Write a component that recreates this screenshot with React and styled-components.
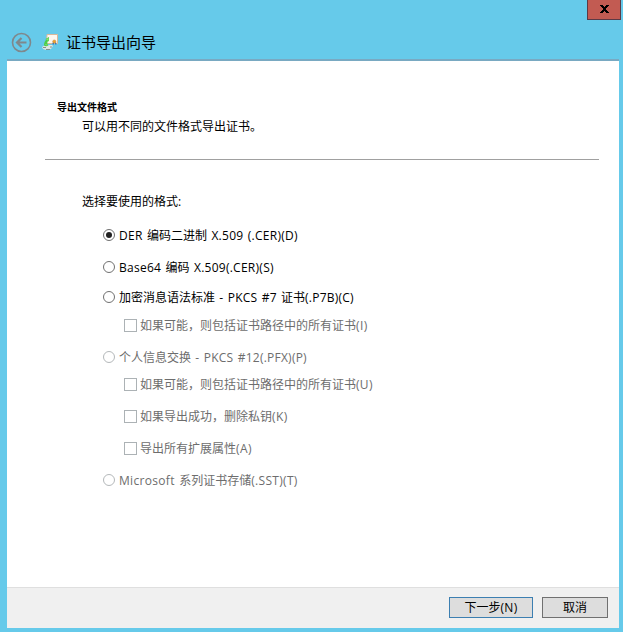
import React from 'react';
import styled, { createGlobalStyle } from 'styled-components';

const GlobalStyle = createGlobalStyle`
  * {
    box-sizing: border-box;
  }

  body {
    margin: 0;
    overflow: hidden;
    font-family: "Open Sans", "Noto Sans CJK SC", sans-serif;
    font-size: 12px;
    color: #000;
  }
`;

const Window = styled.div`
  display: flex;
  flex-direction: column;
  width: 623px;
  height: 632px;
  padding: 0 4px 4px 7px;
  background: #66caea;
`;

const TitleBar = styled.header`
  display: flex;
  flex-direction: column;
  height: 61px;
  border-bottom: 2px solid #79a9c2;
`;

const CloseButton = styled.button`
  display: flex;
  align-items: center;
  justify-content: center;
  align-self: flex-end;
  width: 34px;
  height: 20px;
  margin-right: -2px;
  padding: 0 0 1px;
  border: 1px solid #5b3a46;
  border-top: 0;
  background: #c25b52;
`;

const Heading = styled.div`
  display: flex;
  align-items: center;
  height: 24px;
  margin-top: 10px;
  padding-left: 4px;
`;

const Title = styled.h1`
  margin: 0 0 0 7px;
  font-size: 15px;
  font-weight: 400;
  line-height: 24px;
`;

const BackArrow = styled.svg`
  margin-top: 1px;
`;

const CertIcon = styled.svg`
  margin-left: 10px;
`;

const Page = styled.main`
  flex: 1;
  padding: 37px 20px 0 38px;
  background: #fff;
`;

const Intro = styled.section`
  height: 62px;
  padding-left: 12px;
  border-bottom: 1px solid #a0a0a0;
`;

const IntroTitle = styled.h2`
  margin: 0;
  font-size: 10px;
  font-weight: 700;
  line-height: 18px;
`;

const IntroText = styled.p`
  margin: 1px 0 0;
  padding-left: 25px;
  line-height: 20px;
`;

const Options = styled.section`
  padding: 32px 0 0 37px;
`;

const Prompt = styled.p`
  margin: 0;
  line-height: 20px;
`;

const Option = styled.label`
  display: flex;
  align-items: center;
  width: max-content;
  height: 20px;
  margin-top: ${props => props.$gap}px;
  margin-left: ${props => (props.$nested ? 42 : 21)}px;
  color: ${props => (props.$disabled ? '#6d6d6d' : '#000')};
  white-space: pre;
`;

const Latin = styled.span`
  letter-spacing: ${props => props.$tracking}px;
  word-spacing: 1px;
`;

const Radio = styled.span`
  display: flex;
  align-items: center;
  justify-content: center;
  width: 12px;
  height: 12px;
  margin-right: 4px;
  border: 1px solid ${props => (props.$disabled ? '#b4b8ba' : '#707070')};
  border-radius: 50%;

  &::after {
    content: "";
    width: 6px;
    height: 6px;
    border-radius: 50%;
    background: ${props => (props.$checked ? '#212121' : 'transparent')};
  }
`;

const Checkbox = styled.span`
  width: 13px;
  height: 13px;
  margin-right: 3px;
  border: 1px solid #acb2b5;
`;

const Footer = styled.footer`
  display: flex;
  gap: 9px;
  height: 41px;
  padding: 9px 11px 0 0;
  justify-content: flex-end;
  border-top: 1px solid #dfdfdf;
  background: #f0f0f0;
`;

const Button = styled.button`
  width: ${props => props.$width}px;
  height: 21px;
  padding: 0;
  border: 1px solid ${props => (props.$primary ? '#3c7fb1' : '#707070')};
  background: #ddd;
  color: #000;
  font: inherit;
  line-height: 19px;
`;

const formats = [
  { text: 'DER 编码二进制 X.509 (.CER)(D)', gap: 13, tracking: 0.27, checked: true },
  { text: 'Base64 编码 X.509(.CER)(S)', gap: 12, tracking: 0.26 },
  { text: '加密消息语法标准 - PKCS #7 证书(.P7B)(C)', gap: 10, tracking: 0.22 },
  { text: '如果可能，则包括证书路径中的所有证书(I)', gap: 8, tracking: 0.4, nested: true, disabled: true },
  { text: '个人信息交换 - PKCS #12(.PFX)(P)', gap: 12, tracking: 0.23, disabled: true },
  { text: '如果可能，则包括证书路径中的所有证书(U)', gap: 7, tracking: 0.3, nested: true, disabled: true },
  { text: '如果导出成功，删除私钥(K)', gap: 12, tracking: 0.4, nested: true, disabled: true },
  { text: '导出所有扩展属性(A)', gap: 12, tracking: 0.4, nested: true, disabled: true },
  { text: 'Microsoft 系列证书存储(.SST)(T)', gap: 12, tracking: 0.31, disabled: true },
];

// Latin runs are spaced a little wider than the Chinese text around them
function Label({ text, tracking = 0.3 }) {
  return (
    <span>
      {text.split(/([ -~]+)/).map((part, i) => (
        i % 2 ? <Latin key={i} $tracking={tracking}>{part}</Latin> : part
      ))}
    </span>
  );
}

function BackIcon() {
  return (
    <BackArrow width="21" height="21" viewBox="0 0 21 21" fill="none" stroke="#7f888c">
      <circle cx="10.5" cy="10.5" r="9" strokeWidth="1.6" />
      <path d="M15.5 10.5H6.5M10.5 6l-4.5 4.5 4.5 4.5" strokeWidth="2.2" />
    </BackArrow>
  );
}

function CertificateIcon() {
  return (
    <CertIcon width="17" height="17" viewBox="0 0 17 17">
      <path d="M5 .5h10.5v9H4.5z" fill="#fbf7f0" stroke="#d8b89a" />
      <path d="M0 13l3-2h7l1 1-2 3-5 1-3-1z" fill="#dde5e2" />
      <path d="M1 13.5h3M4 15.5h4M8 13h2" stroke="#849291" />
      <path d="M2 11.5c0-3 1-4.500 2-5.500l-.5-1L7 3v4.500L6 7c-1 2-1 3 .5 4.500-1.500 1-3.500 1-4.500 0z" fill="#4dcc48" />
      <path d="M4.500 6L6 4.500v2M3.500 10l1.500 1.500" fill="none" stroke="#a2ed8c" strokeWidth=".8" />
      <path d="M11.500 8.500l-.5 2M13.500 8.500l.3 2" stroke="#3475bd" strokeWidth="1.400" />
      <circle cx="12.300" cy="7.500" r="1.600" fill="#eea12f" stroke="#b37122" strokeWidth=".4" />
    </CertIcon>
  );
}

export default function App() {
  return (
    <>
      <GlobalStyle />
      <Window>
        <TitleBar>
          <CloseButton aria-label="关闭">
            <svg width="9" height="8" viewBox="0 0 9 8">
              <path d="M0 0h3v1h1v1h1V1h1V0h3v1H8v1H7v1H6v2h1v1h1v1h1v1H6V7H5V6H4v1H3v1H0V7h1V6h1V5h1V3H2V2H1V1H0z" />
            </svg>
          </CloseButton>
          <Heading>
            <BackIcon />
            <CertificateIcon />
            <Title>证书导出向导</Title>
          </Heading>
        </TitleBar>
        <Page>
          <Intro>
            <IntroTitle>导出文件格式</IntroTitle>
            <IntroText>可以用不同的文件格式导出证书。</IntroText>
          </Intro>
          <Options>
            <Prompt>选择要使用的格式:</Prompt>
            {formats.map(item => (
              <Option
                key={item.text}
                $gap={item.gap}
                $nested={item.nested}
                $disabled={item.disabled}
              >
                {item.nested ? <Checkbox /> : <Radio $checked={item.checked} $disabled={item.disabled} />}
                <Label text={item.text} tracking={item.tracking} />
              </Option>
            ))}
          </Options>
        </Page>
        <Footer>
          <Button $width={84} $primary><Label text="下一步(N)" /></Button>
          <Button $width={66}>取消</Button>
        </Footer>
      </Window>
    </>
  );
}
